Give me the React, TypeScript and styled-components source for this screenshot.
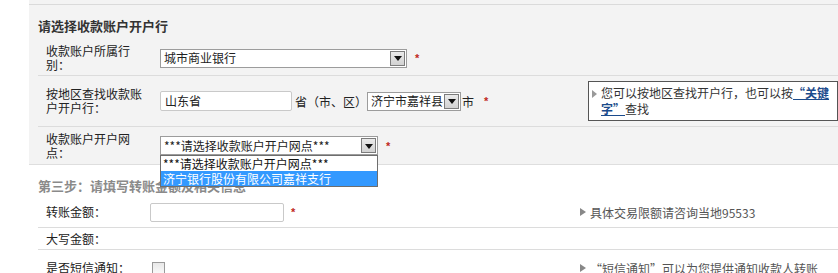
import React from "react";
import styled, { createGlobalStyle } from "styled-components";

const GlobalStyle = createGlobalStyle`
  html, body {
    margin: 0;
    padding: 0;
    background: #fff;
  }
  body {
    font-family: "Noto Sans CJK SC", "Liberation Sans", sans-serif;
    font-size: 12px;
    color: #333;
  }
`;

const Page = styled.div`
  width: 838px;
  height: 273px;
  overflow: hidden;
`;

const Panel = styled.div`
  margin-left: 29px;
  padding-top: 4px;
  background: #f3f3f3;
  border-bottom: 1px solid #dedede;
`;

const PanelBody = styled.div`
  border-top: 1px solid #dadada;
  padding-left: 9px;
`;

const SectionTitle = styled.div<{ $muted?: boolean }>`
  font-size: 13px;
  font-weight: bold;
  line-height: 14px;
  color: ${(p) => (p.$muted ? "#8a8a8a" : "#333")};
`;

const PanelTitle = styled(SectionTitle)`
  padding-top: 14px;
  margin-bottom: 8px;
`;

const Row = styled.div<{ $height: number; $pad?: number; $line?: boolean }>`
  display: flex;
  align-items: center;
  min-height: ${(p) => p.$height}px;
  padding: ${(p) => p.$pad ?? 0}px 0;
  border-bottom: ${(p) => (p.$line ? "1px solid #dcdcdc" : "none")};
`;

const Label = styled.div<{ $width: number }>`
  width: ${(p) => p.$width}px;
  flex: none;
  box-sizing: border-box;
  padding-left: 8px;
  line-height: 14px;
  color: #222;

  & > span {
    display: block;
    width: 100px;
  }
`;

const Field = styled.div`
  flex: 1;
  display: flex;
  align-items: center;
`;

const Select = styled.div<{ $width: number }>`
  position: relative;
  width: ${(p) => p.$width}px;
  height: 19px;
  box-sizing: border-box;
  display: flex;
  align-items: center;
  background: #fff;
  border: 1px solid #9c9c9c;
  padding: 0 1px 0 3px;
`;

const SelectText = styled.span`
  flex: 1;
  white-space: nowrap;
  overflow: hidden;
  line-height: 16px;
  color: #222;
`;

const ArrowButton = styled.span`
  width: 15px;
  height: 15px;
  box-sizing: border-box;
  flex: none;
  display: flex;
  align-items: center;
  justify-content: center;
  background: linear-gradient(#eaeaea, #d2d2d2);
  border: 1px solid #7c7c7c;

  &::after {
    content: "";
    border-left: 4px solid transparent;
    border-right: 4px solid transparent;
    border-top: 5px solid #111;
    margin-top: 1px;
  }
`;

const OptionList = styled.ul`
  position: absolute;
  z-index: 5;
  top: 18px;
  left: -1px;
  width: 216px;
  margin: 0;
  padding: 0;
  list-style: none;
  background: #fff;
  border: 1px solid #6e6e6e;
`;

const Option = styled.li<{ $active?: boolean }>`
  height: 15px;
  line-height: 15px;
  padding-left: 2px;
  white-space: nowrap;
  background: ${(p) => (p.$active ? "#3399ff" : "#fff")};
  color: ${(p) => (p.$active ? "#fff" : "#111")};
`;

const TextInput = styled.div<{ $width: number; $height: number }>`
  width: ${(p) => p.$width}px;
  height: ${(p) => p.$height}px;
  box-sizing: border-box;
  background: #fff;
  border: 1px solid #c9c9c9;
  border-radius: 2px;
  padding-left: 4px;
  line-height: ${(p) => p.$height - 2}px;
  color: #222;
`;

const Inline = styled.span<{ $ml?: number }>`
  margin-left: ${(p) => p.$ml ?? 0}px;
  color: #222;
  white-space: nowrap;
`;

const Star = styled.span<{ $ml?: number }>`
  margin-left: ${(p) => p.$ml ?? 8}px;
  color: #c0281c;
  font-weight: bold;
  font-size: 11px;
  font-family: "Liberation Sans", sans-serif;
`;

const TipBox = styled.div`
  position: relative;
  width: 250px;
  box-sizing: border-box;
  margin-left: auto;
  padding: 3px 2px 3px 12px;
  background: #fff;
  border: 1px solid #555;
  line-height: 16px;
  color: #333;

  &::before {
    content: "";
    position: absolute;
    left: 3px;
    top: 8px;
    border-top: 4px solid transparent;
    border-bottom: 4px solid transparent;
    border-left: 5px solid #999;
  }
`;

const Keyword = styled.a`
  color: #1b4b8c;
  font-weight: bold;
  text-decoration: underline;
`;

const LowerSection = styled.div`
  padding-left: 38px;
`;

const StepTitle = styled(SectionTitle)`
  padding-top: 14px;
  margin-bottom: 4px;
`;

const Hint = styled.div`
  position: relative;
  width: 248px;
  flex: none;
  padding-left: 10px;
  white-space: nowrap;
  color: #555;

  &::before {
    content: "";
    position: absolute;
    left: 0;
    top: 50%;
    margin-top: -4px;
    border-top: 4px solid transparent;
    border-bottom: 4px solid transparent;
    border-left: 6px solid #888;
  }
`;

const Checkbox = styled.span`
  width: 13px;
  height: 13px;
  box-sizing: border-box;
  margin-left: 2px;
  border: 1px solid #9a9a9a;
  background: linear-gradient(#e8e8e8, #fafafa);
`;

const App = (): JSX.Element => {
  return (
    <Page>
      <GlobalStyle />
      <Panel>
        <PanelBody>
          <PanelTitle>请选择收款账户开户行</PanelTitle>
          <Row $height={34} $line>
            <Label $width={122}>
              <span>收款账户所属行别：</span>
            </Label>
            <Field>
              <Select $width={247}>
                <SelectText>城市商业银行</SelectText>
                <ArrowButton />
              </Select>
              <Star>*</Star>
            </Field>
          </Row>
          <Row $height={40} $pad={5} $line>
            <Label $width={122}>
              <span>按地区查找收款账户开户行：</span>
            </Label>
            <Field>
              <TextInput $width={132} $height={20}>
                山东省
              </TextInput>
              <Inline $ml={3}>省（市、区）</Inline>
              <Select $width={94}>
                <SelectText>济宁市嘉祥县</SelectText>
                <ArrowButton />
              </Select>
              <Inline $ml={1}>市</Inline>
              <Star $ml={10}>*</Star>
              <TipBox>
                您可以按地区查找开户行，也可以按<Keyword>“关键字”</Keyword>查找
              </TipBox>
            </Field>
          </Row>
          <Row $height={37}>
            <Label $width={122}>
              <span>收款账户开户网点：</span>
            </Label>
            <Field>
              <Select $width={218}>
                <SelectText>***请选择收款账户开户网点***</SelectText>
                <ArrowButton />
                <OptionList>
                  <Option>***请选择收款账户开户网点***</Option>
                  <Option $active>济宁银行股份有限公司嘉祥支行</Option>
                </OptionList>
              </Select>
              <Star>*</Star>
            </Field>
          </Row>
        </PanelBody>
      </Panel>
      <LowerSection>
        <StepTitle $muted>第三步：请填写转账金额及相关信息</StepTitle>
        <Row $height={30} $line>
          <Label $width={112}>转账金额：</Label>
          <Field>
            <TextInput $width={134} $height={19} />
            <Star $ml={7}>*</Star>
          </Field>
          <Hint>具体交易限额请咨询当地95533</Hint>
        </Row>
        <Row $height={21} $line>
          <Label $width={112}>大写金额：</Label>
          <Field />
        </Row>
        <Row $height={36}>
          <Label $width={112}>是否短信通知：</Label>
          <Field>
            <Checkbox />
          </Field>
          <Hint>“短信通知”可以为您提供通知收款人转账</Hint>
        </Row>
      </LowerSection>
    </Page>
  );
};

export default App;
